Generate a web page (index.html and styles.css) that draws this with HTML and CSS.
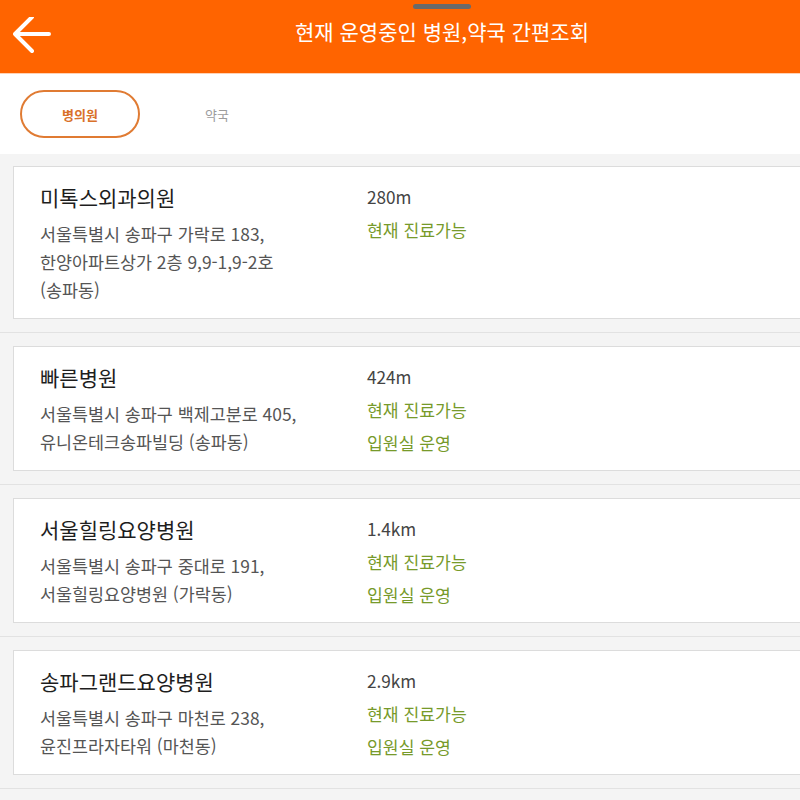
FILE: index.html
```html
<!DOCTYPE html>
<html lang="ko">
<head>
<meta charset="utf-8">
<title>현재 운영중인 병원,약국 간편조회</title>
<link rel="stylesheet" href="styles.css">
</head>
<body>
<header class="header">
  <span class="handle"></span>
  <div class="back">
    <svg width="40" height="40" viewBox="0 0 40 40">
      <path d="M36 17 H2 M19 0 L2 17 L19 34" fill="none" stroke="#fff" stroke-width="4" stroke-linecap="round" stroke-linejoin="round"/>
    </svg>
  </div>
  <h1 class="title">현재 운영중인 병원,약국 간편조회</h1>
</header>
<nav class="tabs">
  <div class="tab active">병의원</div>
  <div class="tab">약국</div>
</nav>
<main class="list">
  <section class="item">
    <div class="card">
      <div class="left">
        <div class="name">미톡스외과의원</div>
        <div class="addr">서울특별시 송파구 가락로 183,<br>한양아파트상가 2층 9,9-1,9-2호<br>(송파동)</div>
      </div>
      <div class="right">
        <div class="dist">280m</div>
        <div class="status">현재 진료가능</div>
      </div>
    </div>
  </section>
  <section class="item">
    <div class="card">
      <div class="left">
        <div class="name">빠른병원</div>
        <div class="addr">서울특별시 송파구 백제고분로 405,<br>유니온테크송파빌딩 (송파동)</div>
      </div>
      <div class="right">
        <div class="dist">424m</div>
        <div class="status">현재 진료가능</div>
        <div class="status">입원실 운영</div>
      </div>
    </div>
  </section>
  <section class="item">
    <div class="card">
      <div class="left">
        <div class="name">서울힐링요양병원</div>
        <div class="addr">서울특별시 송파구 중대로 191,<br>서울힐링요양병원 (가락동)</div>
      </div>
      <div class="right">
        <div class="dist">1.4km</div>
        <div class="status">현재 진료가능</div>
        <div class="status">입원실 운영</div>
      </div>
    </div>
  </section>
  <section class="item">
    <div class="card">
      <div class="left">
        <div class="name">송파그랜드요양병원</div>
        <div class="addr">서울특별시 송파구 마천로 238,<br>윤진프라자타워 (마천동)</div>
      </div>
      <div class="right">
        <div class="dist">2.9km</div>
        <div class="status">현재 진료가능</div>
        <div class="status">입원실 운영</div>
      </div>
    </div>
  </section>
</main>
</body>
</html>
```
FILE: styles.css
```css
* { box-sizing: border-box; }
html, body {
  margin: 0;
  padding: 0;
  background: #f4f4f4;
  overflow: hidden;
  font-family: "Noto Sans CJK KR", "Noto Sans", sans-serif;
}
.header {
  position: relative;
  height: 74px;
  background: #ff6400;
  border-bottom: 1px solid #ffd2b5;
  display: flex;
  align-items: center;
}
.handle {
  position: absolute;
  left: 413px;
  top: 4px;
  width: 58px;
  height: 5px;
  border-radius: 3px;
  background: #6a6a6a;
}
.back {
  width: 84px;
  height: 73px;
  display: flex;
  align-items: center;
  padding-left: 13px;
  padding-top: 1px;
}
.back svg { display: block; }
.title {
  flex: 1;
  margin: 0;
  text-align: center;
  color: #fff;
  font-size: 21px;
  font-weight: 400;
  line-height: 28px;
  padding-bottom: 11px;
}
.tabs {
  height: 80px;
  background: #fff;
  display: flex;
  align-items: center;
  padding-left: 20px;
}
.tab {
  width: 154px;
  height: 48px;
  display: flex;
  align-items: center;
  justify-content: center;
  font-size: 13px;
  color: #9c9c9c;
}
.tab.active {
  width: 120px;
  border: 2px solid #e07b33;
  border-radius: 24px;
  color: #d9712a;
  font-weight: 700;
}
.list { background: #f4f4f4; }
.item {
  padding: 12px 0 13px 13px;
  border-bottom: 1px solid #e2e2e2;
}
.item + .item { padding-top: 13px; }
.card {
  background: #fff;
  border: 1px solid #dcdcdc;
  border-right: none;
  display: flex;
  align-items: flex-start;
  padding: 13px 0 11px 26px;
}
.left {
  width: 327px;
  padding-top: 3px;
  padding-bottom: 3px;
}
.name {
  font-size: 21px;
  line-height: 28px;
  color: #1e1e1e;
}
.addr {
  margin-top: 9px;
  font-size: 17.4px;
  line-height: 28px;
  color: #555;
}
.right {
  font-size: 17.2px;
  line-height: 33px;
}
.dist { color: #444; }
.status { color: #779a2a; }
```
